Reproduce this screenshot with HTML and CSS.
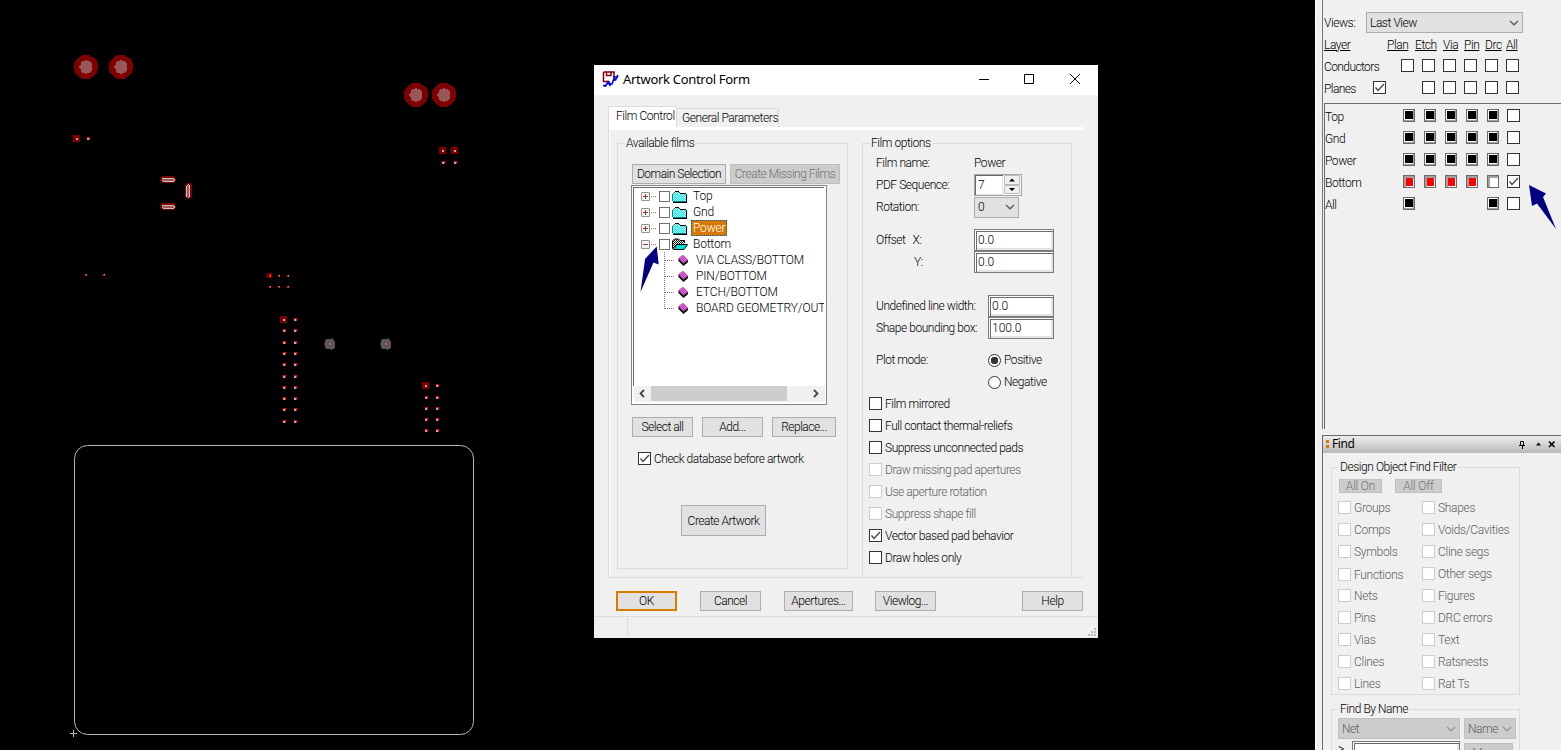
FILE: index.html
```
<!DOCTYPE html>
<html lang="en">
<head>
<meta charset="utf-8">
<title>Artwork Control Form</title>
<link rel="stylesheet" href="styles.css">
</head>
<body>
<svg class="defs" width="0" height="0">
  <defs>
    <pattern id="cyan" width="2" height="2" patternUnits="userSpaceOnUse"><rect width="2" height="2" fill="#c8ffff"/><path d="M0 0h1v1H0zM1 1h1v1H1z" fill="#00f8ff"/></pattern>
    <pattern id="mag" width="2" height="2" patternUnits="userSpaceOnUse"><rect width="2" height="2" fill="#a0a0a0"/><path d="M0 0h1v1H0zM1 1h1v1H1z" fill="#f0f"/></pattern>
    <pattern id="blk" width="2" height="2" patternUnits="userSpaceOnUse"><rect width="2" height="2" fill="#fff"/><path d="M0 0h1v1H0zM1 1h1v1H1z" fill="#000"/></pattern>
    <symbol id="folder" viewBox="0 0 16 13"><g shape-rendering="crispEdges"><path d="M1 4h13v7H1z" fill="url(#cyan)"/><path d="M3 2h4v2H3z" fill="url(#cyan)"/><path d="M0 4h1v7H0zM1 3h1v1H1zM2 2h1v1H2zM1 11h13v1H1z" fill="#008080"/><path d="M3 1h4v1H3zM7 2h1v1H7zM8 3h6v1H8zM14 4h1v8h-1zM1 12h14v1H1z" fill="#000"/></g></symbol>
    <symbol id="open" viewBox="0 0 16 13"><path d="M.5 11V3L2.500 1h4L8 2.500h4.500V5" fill="url(#blk)" stroke="#000"/><path d="M1.500 11.500 5 6.500h10.500L12 11.500z" fill="#00e0e0" stroke="#000"/></symbol>
    <symbol id="leaf" viewBox="0 0 11 11"><path d="M.5 3.500 5 0 10 5 5.500 9z" fill="url(#mag)" stroke="#707070" stroke-width=".5"/><path d="M.5 3.500 5.500 8.500 10 5V7L5.500 11 .5 6z" fill="#000"/></symbol>
    <symbol id="check" viewBox="0 0 13 13"><path d="M2.500 6.500 5 9.500 11 3" fill="none" stroke="#444" stroke-width="1.300"/></symbol>
    <symbol id="down" viewBox="0 0 10 6"><path d="M1 1l4 3.800L9 1" fill="none" stroke="currentColor" stroke-width="1.200"/></symbol>
    <g id="dot"><path fill="#f00" d="M0 0h3v3H0z"/><path fill="#b0b0b0" d="M0 1h2v2H0z"/></g>
    <g id="mini"><path fill="#f00" d="M0 0h2v2H0z"/><path fill="#b0b0b0" d="M1 0h1v1H1z"/></g>
    <g id="sq"><path fill="#800000" d="M0 0h7v7H0z"/><path fill="#b8a8a8" d="M3 3h2v2H3z"/></g>
    <g id="pad"><path d="M-3-12h6l5 3 3 3 1 4v4l-1 3-3 4-5 3h-6l-5-3-3-4-1-3v-4l1-4 3-3z" fill="#800000"/><path d="M-2-6 0-7l2 1h2l2 3v6L4 6H2L0 7l-2-1h-2l-1-3-2-3 2-3 1-3z" fill="#985858"/></g>
    <g id="via"><path d="M-4-5h5l1-1 1 1 2 3v5L3 5 1 6 0 5h-4L-5 2-6 0l1-2z" fill="#585858"/><path fill="#d85050" d="M-1-1h2v2h-2z"/></g>
    <g id="slot"><path d="M2 0h11l3 2v3l-3 2H2L0 5V2z" fill="#800000"/><path d="M2 2h12l1 2-1 1v1H3L1 4l1-1z" fill="#c8c0c0"/><path d="M2 3h12v2H3z" fill="#985858"/></g>
  </defs>
</svg>
<div class="screen">
  <main class="canvas">
    <svg class="board" width="594" height="750" shape-rendering="crispEdges">
      <use href="#pad" x="86" y="67"/><use href="#pad" x="121" y="67"/><use href="#pad" x="416" y="95"/><use href="#pad" x="444" y="95"/>
      <use href="#sq" x="73" y="135"/><use href="#dot" x="87" y="137"/>
      <use href="#sq" x="439" y="147"/><use href="#sq" x="451" y="147"/><use href="#dot" x="442" y="161"/><use href="#dot" x="454" y="161"/>
      <use href="#slot" x="160" y="176"/><use href="#slot" x="160" y="203"/><use href="#slot" transform="translate(192 183) rotate(90)"/>
      <use href="#mini" x="85" y="274"/><use href="#mini" x="103" y="274"/>
      <path fill="#800000" d="M267 273h5v5h-5z"/><use href="#mini" x="269" y="275"/><use href="#mini" x="278" y="275"/><use href="#mini" x="287" y="275"/>
      <use href="#mini" x="269" y="286"/><use href="#mini" x="278" y="286"/><use href="#mini" x="287" y="286"/>
      <use href="#sq" x="280" y="316"/><use href="#dot" x="294" y="318"/>
      <use href="#dot" x="283" y="329"/><use href="#dot" x="294" y="329"/><use href="#dot" x="283" y="341"/><use href="#dot" x="294" y="341"/>
      <use href="#dot" x="283" y="352"/><use href="#dot" x="294" y="352"/><use href="#dot" x="283" y="363"/><use href="#dot" x="294" y="363"/>
      <use href="#dot" x="283" y="375"/><use href="#dot" x="294" y="375"/><use href="#dot" x="283" y="386"/><use href="#dot" x="294" y="386"/>
      <use href="#dot" x="283" y="397"/><use href="#dot" x="294" y="397"/><use href="#dot" x="283" y="408"/><use href="#dot" x="294" y="408"/>
      <use href="#dot" x="283" y="420"/><use href="#dot" x="294" y="420"/>
      <use href="#sq" x="422" y="382"/><use href="#dot" x="436" y="384"/>
      <use href="#dot" x="425" y="396"/><use href="#dot" x="436" y="396"/><use href="#dot" x="425" y="407"/><use href="#dot" x="436" y="407"/>
      <use href="#dot" x="425" y="418"/><use href="#dot" x="436" y="418"/><use href="#dot" x="425" y="429"/><use href="#dot" x="436" y="429"/>
      <use href="#via" x="330" y="344"/><use href="#via" x="386" y="344"/>
      <rect x="74.500" y="445.500" width="399" height="289" rx="13" fill="none" stroke="#b8b8b8" shape-rendering="auto"/>
      <path d="M70 733.500h7M73.500 730v7" stroke="#b8b8b8"/>
    </svg>
    <section class="dialog">
      <header class="titlebar">
        <svg class="app-icon" width="17" height="17" viewBox="0 0 17 17"><path d="M1.500 1h10.500v6M1.500 1v9.500h5M4.500 1v3.500h4.500V1" fill="#fff" stroke="#800000" stroke-width="1.500"/><path d="M1 14.500h3l2-3.500 1 2h3l1.500-4h2L16 4M3 16v-2M8 15v-3M5 11h3M12 10V6h4" fill="none" stroke="#0000f0" stroke-width="1.700"/></svg>
        <h1 class="title">Artwork Control Form</h1>
        <svg class="win-buttons" width="104" height="12"><path d="M1 6.500h10M46.500 1.500h9v9h-9zM92 1l10 10M102 1 92 11" fill="none" stroke="#000"/></svg>
      </header>
      <div class="body">
        <div class="tabs"><span class="tab active">Film Control</span><span class="tab">General Parameters</span></div>
        <div class="page">
          <fieldset class="group films">
            <legend>Available films</legend>
            <div class="film-buttons"><button class="btn b94">Domain Selection</button><button class="btn b110" disabled>Create Missing Films</button></div>
            <div class="tree">
              <div class="rows">
                <div class="node"><i class="exp plus"></i><i class="dots"></i><i class="box"></i><svg width="16" height="13"><use href="#folder"/></svg><span class="name">Top</span></div>
                <div class="node"><i class="exp plus"></i><i class="dots"></i><i class="box"></i><svg width="16" height="13"><use href="#folder"/></svg><span class="name">Gnd</span></div>
                <div class="node"><i class="exp plus"></i><i class="dots"></i><i class="box"></i><svg width="16" height="13"><use href="#folder"/></svg><span class="name selected">Power</span></div>
                <div class="node"><i class="exp"></i><i class="dots"></i><i class="box"></i><svg width="16" height="13"><use href="#open"/></svg><span class="name">Bottom</span></div>
                <div class="children">
                  <div class="child"><svg width="11" height="11"><use href="#leaf"/></svg><span>VIA CLASS/BOTTOM</span></div>
                  <div class="child"><svg width="11" height="11"><use href="#leaf"/></svg><span>PIN/BOTTOM</span></div>
                  <div class="child"><svg width="11" height="11"><use href="#leaf"/></svg><span>ETCH/BOTTOM</span></div>
                  <div class="child"><svg width="11" height="11"><use href="#leaf"/></svg><span>BOARD GEOMETRY/OUT</span></div>
                </div>
              </div>
              <div class="scroll"><svg width="17" height="15"><path d="M10 4 6.500 7.500 10 11" fill="none" stroke="#444" stroke-width="1.800"/></svg><i class="thumb"></i><svg width="17" height="15"><path d="M6 4l3.500 3.500L6 11" fill="none" stroke="#444" stroke-width="1.800"/></svg></div>
            </div>
            <div class="edit-buttons"><button class="btn b61">Select all</button><button class="btn b61">Add...</button><button class="btn b64">Replace...</button></div>
            <label class="opt dbcheck"><i class="cb"><svg width="13" height="13"><use href="#check"/></svg></i>Check database before artwork</label>
            <button class="btn create">Create Artwork</button>
          </fieldset>
          <fieldset class="group options">
            <legend>Film options</legend>
            <div class="field"><span class="key">Film name:</span><span>Power</span></div>
            <div class="field"><span class="key">PDF Sequence:</span><div class="spin"><span class="spin-value">7</span><svg width="17" height="20"><path d="M.5.500h15v9H.5zM.5 10.500h15v8H.5z" fill="#f0f0f0" stroke="#bbb"/><path d="M5 6.500 8 3.500l3 3zM5 13h6l-3 3z"/></svg></div></div>
            <div class="field"><span class="key">Rotation:</span><div class="select rot"><span>0</span><svg width="10" height="6"><use href="#down"/></svg></div></div>
            <div class="field gap11"><span class="key">Offset<span class="axis">X:</span></span><div class="input w80">0.0</div></div>
            <div class="field"><span class="key only-axis">Y:</span><div class="input w80">0.0</div></div>
            <div class="field wide gap22"><span class="key">Undefined line width:</span><div class="input w66">0.0</div></div>
            <div class="field wide"><span class="key">Shape bounding box:</span><div class="input w66">100.0</div></div>
            <div class="field wide gap10"><span class="key">Plot mode:</span><i class="radio on"></i><span>Positive</span></div>
            <div class="field wide"><span class="key"></span><i class="radio"></i><span>Negative</span></div>
            <label class="opt"><i class="cb"></i>Film mirrored</label>
            <label class="opt"><i class="cb"></i>Full contact thermal-reliefs</label>
            <label class="opt"><i class="cb"></i>Suppress unconnected pads</label>
            <label class="opt off"><i class="cb"></i>Draw missing pad apertures</label>
            <label class="opt off"><i class="cb"></i>Use aperture rotation</label>
            <label class="opt off"><i class="cb"></i>Suppress shape fill</label>
            <label class="opt"><i class="cb"><svg width="13" height="13"><use href="#check"/></svg></i>Vector based pad behavior</label>
            <label class="opt"><i class="cb"></i>Draw holes only</label>
          </fieldset>
        </div>
        <div class="actions"><button class="btn b61 ok">OK</button><button class="btn b61">Cancel</button><button class="btn b69">Apertures...</button><button class="btn b61">Viewlog...</button><button class="btn b61 help">Help</button></div>
      </div>
      <footer class="status"><i class="cell"></i><svg width="9" height="9"><path d="M6 0h2v2H6zM3 3h2v2H3zM6 3h2v2H6zM0 6h2v2H0zM3 6h2v2H3zM6 6h2v2H6z" fill="#bbb"/></svg></footer>
      <svg class="arrow film-arrow" width="20" height="48"><path d="M16.700.5 18.700 18.500 13.500 16.500.5 46 5 13.500 5 13z" fill="#000080"/></svg>
    </section>
  </main>
  <aside class="side">
    <section class="visibility">
      <div class="views"><span class="views-label">Views:</span><div class="select view"><span>Last View</span><svg width="10" height="6"><use href="#down"/></svg></div></div>
      <div class="grid heads"><u class="layer">Layer</u><u class="plan">Plan</u><u>Etch</u><u>Via</u><u>Pin</u><u>Drc</u><u>All</u></div>
      <div class="grid all"><span class="layer">Conductors</span><i></i><i class="cb"></i><i class="cb"></i><i class="cb"></i><i class="cb"></i><i class="cb"></i><i class="cb"></i></div>
      <div class="grid all"><span class="layer">Planes</span><i class="cb"><svg width="13" height="13"><use href="#check"/></svg></i><i></i><i class="cb"></i><i class="cb"></i><i class="cb"></i><i class="cb"></i><i class="cb"></i></div>
      <div class="layers">
        <div class="grid row"><span class="layer">Top</span><i></i><i class="sw"></i><i class="sw"></i><i class="sw"></i><i class="sw"></i><i class="sw"></i><i class="cb"></i></div>
        <div class="grid row"><span class="layer">Gnd</span><i></i><i class="sw"></i><i class="sw"></i><i class="sw"></i><i class="sw"></i><i class="sw"></i><i class="cb"></i></div>
        <div class="grid row"><span class="layer">Power</span><i></i><i class="sw"></i><i class="sw"></i><i class="sw"></i><i class="sw"></i><i class="sw"></i><i class="cb"></i></div>
        <div class="grid row"><span class="layer">Bottom</span><i></i><i class="sw red"></i><i class="sw red"></i><i class="sw red"></i><i class="sw red"></i><i class="sw none"></i><i class="cb"><svg width="13" height="13"><use href="#check"/></svg></i></div>
        <div class="grid row"><span class="layer">All</span><i></i><i class="sw"></i><i></i><i></i><i></i><i class="sw"></i><i class="cb"></i></div>
      </div>
    </section>
    <section class="find">
      <header class="find-bar"><i class="mark"></i><h2>Find</h2><svg width="38" height="9"><path d="M2.500 5V1.500h3V5M1 5.500h6M4.500 6v3" fill="none" stroke="#000"/><path d="M18 5.500 20.500 2.500 23 5.500z"/><path d="M31 1.500l5.500 5.500M36.500 1.500l-5.500 5.500" stroke="#000" stroke-width="1.600"/></svg></header>
      <fieldset class="group filter">
        <legend>Design Object Find Filter</legend>
        <div class="all-buttons"><button class="btn mini43" disabled>All On</button><button class="btn mini47" disabled>All Off</button></div>
        <div class="objects">
          <label class="opt off"><i class="cb"></i>Groups</label><label class="opt off"><i class="cb"></i>Shapes</label>
          <label class="opt off"><i class="cb"></i>Comps</label><label class="opt off"><i class="cb"></i>Voids/Cavities</label>
          <label class="opt off"><i class="cb"></i>Symbols</label><label class="opt off"><i class="cb"></i>Cline segs</label>
          <label class="opt off low"><i class="cb"></i>Functions</label><label class="opt off"><i class="cb"></i>Other segs</label>
          <label class="opt off"><i class="cb"></i>Nets</label><label class="opt off"><i class="cb"></i>Figures</label>
          <label class="opt off"><i class="cb"></i>Pins</label><label class="opt off"><i class="cb"></i>DRC errors</label>
          <label class="opt off"><i class="cb"></i>Vias</label><label class="opt off"><i class="cb"></i>Text</label>
          <label class="opt off"><i class="cb"></i>Clines</label><label class="opt off"><i class="cb"></i>Ratsnests</label>
          <label class="opt off"><i class="cb"></i>Lines</label><label class="opt off"><i class="cb"></i>Rat Ts</label>
        </div>
      </fieldset>
      <fieldset class="group byname">
        <legend>Find By Name</legend>
        <div class="name-row"><div class="select dis net"><span>Net</span><svg width="10" height="6"><use href="#down"/></svg></div><div class="select dis kind"><span>Name</span><svg width="10" height="6"><use href="#down"/></svg></div></div>
        <div class="name-row second"><span class="gt">&gt;</span><div class="input w108"></div><button class="btn more" disabled>More...</button></div>
      </fieldset>
    </section>
    <svg class="arrow layer-arrow" width="29" height="46"><path d="M1 1 18 9.500 15 13 28 45 9 19.500 4 22z" fill="#000080"/></svg>
  </aside>
</div>
</body>
</html>
```
FILE: styles.css
```
* { box-sizing: border-box; }
body { margin: 0; font: 300 12px/14px Roboto, "Liberation Sans", sans-serif; letter-spacing: -0.45px; color: #000; background: #000; overflow: hidden; white-space: nowrap; }
h1, h2, fieldset, legend { margin: 0; padding: 0; border: 0; }
i { font-style: normal; }
svg { display: block; flex: none; }
.defs { position: absolute; }
.screen { display: flex; width: 1561px; height: 750px; overflow: hidden; }
.canvas { position: relative; width: 1315px; height: 750px; background: #000; }
.side { position: relative; width: 246px; height: 750px; background: #f0f0f0; border-left: 1px solid #fff; padding-left: 6px; overflow: hidden; }
.arrow { position: absolute; }
.film-arrow { left: 46px; top: 181px; }
.layer-arrow { left: 212px; top: 184px; }

/* dialog window */
.dialog { position: absolute; left: 594px; top: 65px; width: 504px; height: 573px; background: #f0f0f0; display: flex; flex-direction: column; }
.titlebar { height: 30px; background: #fff; display: flex; align-items: center; padding: 0 16px 2px 8px; }
.title { font: 13px/16px "Noto Sans", sans-serif; letter-spacing: -0.3px; margin-left: 4px; flex: 1; }
.body { height: 521px; padding: 11px 0 0 14px; }
.tabs { display: flex; align-items: flex-end; height: 21px; }
.tab { height: 19px; border: 1px solid #dcdcdc; border-left: 0; border-bottom: 0; width: 102px; padding: 2px 0 0 5px; }
.tab.active { width: 69px; height: 21px; background: #fff; border-left: 1px solid #dcdcdc; padding: 2px 0 0 7px; }
.page { width: 475px; height: 451px; border: 1px solid #dcdcdc; border-right: 0; border-top: 0; box-shadow: inset 1px 3px #fff; display: flex; align-items: flex-start; padding: 9px 0 0 8px; }
.group { border: 1px solid #dcdcdc; min-width: 0; }
.group legend { margin-left: 6px; padding: 0 2px; height: 14px; }
.films { width: 231px; height: 433px; letter-spacing: -0.5px; }
.options { width: 210px; height: 441px; margin-left: 14px; border-bottom: 0; padding-top: 2px; }
.film-buttons { display: flex; gap: 4px; padding: 14px 0 0 14px; }
.btn { font: inherit; letter-spacing: inherit; height: 20px; padding: 0; border: 1px solid #adadad; background: #e1e1e1; color: #000; flex: none; white-space: nowrap; }
.btn:disabled { background: #ccc; border-color: #bfbfbf; color: #737373; }
.b94 { width: 94px; }
.b110 { width: 110px; }
.b61 { width: 61px; }
.b64 { width: 64px; }
.b69 { width: 69px; }
.tree { margin: 1px 0 0 13px; width: 196px; height: 220px; border: 1px solid #888480; background: #fff; padding: 1px; }
.rows { height: 199px; border-top: 1px solid #696969; border-left: 1px solid #696969; margin-right: 1px; overflow: hidden; }
.node { display: flex; align-items: center; height: 16px; padding-left: 7px; }
.exp { width: 9px; height: 9px; border: 1px solid #919191; border-radius: 1px; background: linear-gradient(#a04020, #a04020) center/5px 1px no-repeat, #f4f4f4; }
.exp.plus { background: linear-gradient(#a04020, #a04020) center/5px 1px no-repeat, linear-gradient(#a04020, #a04020) center/1px 5px no-repeat, #f4f4f4; }
.dots { width: 5px; height: 1px; border-top: 1px dotted #808080; margin: 0 3px 0 1px; }
.box { width: 11px; height: 11px; border: 1px solid #707070; margin-right: 2px; }
.name { height: 16px; line-height: 16px; padding: 0 2px; margin-left: 3px; letter-spacing: -0.2px; }
.name.selected { background: #d87800; color: #fff; outline: 1px dotted #0060c0; outline-offset: -1px; }
.children { margin-left: 30px; background: repeating-linear-gradient(#808080 0 1px, #fff 1px 2px) 0 0/1px 56px no-repeat; }
.child { display: flex; align-items: center; height: 16px; gap: 7px; letter-spacing: -0.12px; }
.child::before { content: ""; flex: none; width: 10px; border-top: 1px dotted #808080; margin-right: -3px; }
.scroll { display: flex; height: 16px; margin-left: 1px; border-bottom: 1px solid #f0f0f0; background: #f0f0f0; width: 191px; justify-content: space-between; }
.thumb { width: 136px; height: 15px; background: #cdcdcd; margin-right: auto; }
.edit-buttons { display: flex; gap: 9px; padding: 12px 0 0 14px; }
.opt { display: flex; align-items: center; height: 22px; gap: 3px; padding-left: 6px; }
.off { color: #606060; }
.cb { display: block; width: 13px; height: 13px; border: 1px solid #333; background: #fff; flex: none; }
.opt .cb { margin-bottom: 1px; }
.cb svg { margin: -1px; }
.off .cb { border-color: #ccc; }
.dbcheck { margin-top: 11px; padding-left: 20px; }
.create { display: block; width: 85px; height: 31px; margin: 35px 0 0 63px; }
.field { display: flex; align-items: center; height: 22px; padding-left: 13px; }
.key { width: 98px; flex: none; }
.wide .key { width: 112px; }
.axis { margin-left: 7px; }
.only-axis { padding-left: 38px; }
.gap11 { margin-top: 11px; }
.gap22 { margin-top: 22px; }
.gap10 { margin-top: 10px; }
.input { height: 22px; background: #fff; border: 1px solid #7a7a7a; padding: 3px 0 0 3px; box-shadow: inset 1px 1px #fff, inset 2px 2px #696969, inset -2px -2px #e3e3e3; letter-spacing: 0; }
.w80 { width: 80px; }
.w66 { width: 66px; }
.w108 { width: 108px; }
.spin { width: 48px; height: 22px; border: 1px solid #a8a2a2; background: #fff; display: flex; align-items: center; }
.spin-value { width: 29px; height: 20px; padding: 3px 0 0 3px; box-shadow: inset 1px 1px #696969, inset -1px -1px #e3e3e3; margin-right: 1px; }
.select { display: flex; align-items: center; justify-content: space-between; height: 21px; padding: 0 3px; border: 1px solid #adadad; background: #e1e1e1; color: #000; }
.select svg { color: #555; }
.rot { width: 45px; }
.radio { width: 13px; height: 13px; border: 1px solid #333; border-radius: 50%; background: #fff; margin-right: 3px; }
.radio.on { background: radial-gradient(circle, #333 3.5px, #fff 4px); }
.actions { display: flex; gap: 23px; padding: 13px 15px 0 8px; }
.actions .btn:nth-child(4) { margin-left: -1px; }
.ok { border: 2px solid #d87c00; }
.help { margin-left: auto; }
.status { height: 22px; border-top: 1px solid #dcdcdc; display: flex; justify-content: space-between; align-items: flex-end; padding: 0 1px 1px 0; }
.cell { width: 34px; height: 19px; border-right: 1px solid #dcdcdc; }

/* layer visibility */
.visibility { height: 429px; border-left: 1px solid #777; }
.views { display: flex; align-items: center; padding: 12px 0 0 1px; }
.views-label { width: 42px; }
.view { width: 157px; }
.grid { display: grid; grid-template-columns: 49px 28px repeat(6, 21px); align-items: center; height: 22px; padding-left: 1px; }
.heads { grid-template-columns: 63px 28px 28px 21px 21px 21px 21px; height: 23px; }
.all .layer { letter-spacing: -0.6px; }
.all .cb { margin-bottom: 3px; }
.layers { margin-left: 1px; height: 326px; border: 1px solid #696969; border-right: 0; border-bottom: 0; margin-top: 3px; padding-top: 1px; }
.row { padding-left: 0; grid-template-columns: 50px 28px repeat(4, 21px) 20px 21px; }
.row .cb { margin-bottom: 1px; }
.row .layer { margin-top: 2px; }
.sw { display: block; width: 12px; height: 13px; border: 1px solid #696969; background: linear-gradient(#000, #000) 1px 1px/8px 8px no-repeat, linear-gradient(#fff, #fff) 0 0/9px 10px no-repeat, #a0a0a0; margin-bottom: 1px; }
.sw.red { background: linear-gradient(#f00, #f00) 2px 2px/7px 8px no-repeat, linear-gradient(#fff, #fff) 2px 2px/9px 10px no-repeat, #a0a0a0; }
.sw.none { background: linear-gradient(#fff, #fff) 2px 2px/9px 10px no-repeat, #a0a0a0; }

/* find panel */
.find { margin-top: 6px; border: 1px solid #696969; border-right: 0; height: 320px; }
.find-bar { display: flex; align-items: center; height: 17px; padding: 0 5px 2px 3px; background: linear-gradient(#eee, #b8b8b8); }
.mark { width: 3px; height: 8px; background: linear-gradient(#d87c00 3px, transparent 3px 5px, #d87c00 5px); margin-right: 3px; }
.find-bar h2 { font: 12px/14px "Noto Sans", sans-serif; flex: 1; letter-spacing: -0.4px; }
.find-bar svg { margin-top: 2px; }
.filter { margin: 7px 0 0 8px; width: 189px; height: 235px; }
.all-buttons { display: flex; gap: 13px; padding: 5px 0 0 7px; letter-spacing: -0.2px; }
.all-buttons .btn { height: 14px; line-height: 12px; }
.mini43 { width: 43px; }
.mini47 { width: 47px; }
.objects { display: grid; grid-template-columns: 84px 1fr; padding-top: 4px; letter-spacing: -0.3px; }
.low { padding-top: 1px; }
.byname { margin: 7px 0 0 8px; width: 189px; height: 60px; }
.name-row { display: flex; gap: 4px; padding: 2px 0 0 6px; }
.second { padding-top: 2px; align-items: flex-start; }
.dis { background: #ccc; border-color: #bfbfbf; color: #606060; }
.dis svg { color: #999; }
.net { width: 122px; }
.kind { width: 52px; }
.gt { width: 10px; padding-top: 1px; }
.more { width: 49px; margin-top: 2px; }
```
